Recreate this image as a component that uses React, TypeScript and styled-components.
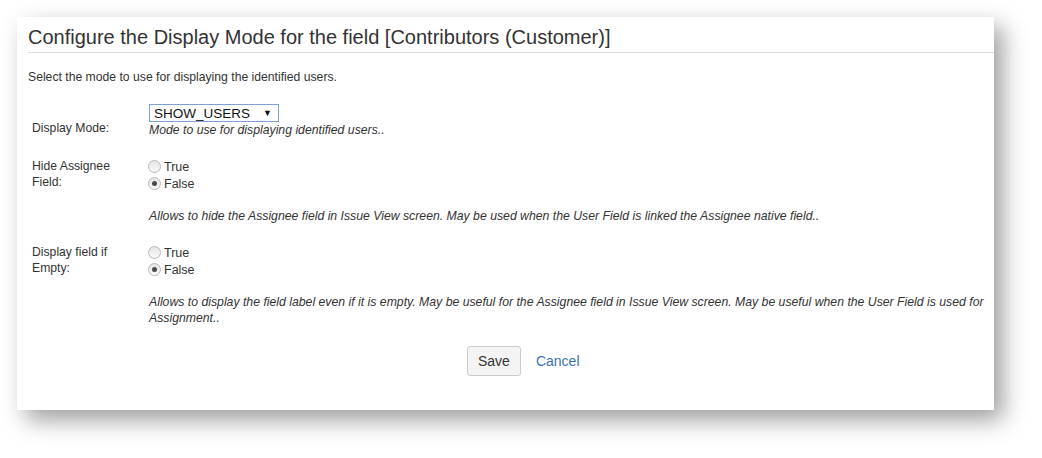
import React from 'react';
import styled, { createGlobalStyle } from 'styled-components';

const GlobalStyle = createGlobalStyle`
    html, body {
        margin: 0;
        padding: 0;
        background: #ffffff;
    }
    body {
        font-family: "Liberation Sans", Arial, sans-serif;
        color: #333333;
    }
`;

const Page = styled.div`
    width: 1042px;
    height: 458px;
    padding: 17px 0 0 17px;
    box-sizing: border-box;
    background: #ffffff;
`;

const Panel = styled.div`
    width: 977px;
    height: 393px;
    box-sizing: border-box;
    padding: 8px 2px 0 11px;
    background: #ffffff;
    box-shadow: 9px 10px 22px rgba(0, 0, 0, 0.38);
`;

const Header = styled.div`
    margin-right: -2px;
    padding-bottom: 3px;
    border-bottom: 1px solid #dcdcdc;
`;

const Title = styled.h2`
    margin: 0;
    font-size: 20px;
    line-height: 24px;
    font-weight: normal;
    color: #333333;
`;

const Intro = styled.p`
    margin: 16px 0 19px 0;
    font-size: 12.2px;
    line-height: 16px;
`;

const FormGrid = styled.div`
    display: grid;
    grid-template-columns: 121px 1fr;
    row-gap: 20px;
`;

const Label = styled.div<{ $offset?: number }>`
    padding: ${p => p.$offset ?? 0}px 0 0 4px;
    font-size: 12.2px;
    line-height: 16px;
    width: 92px;
`;

const Field = styled.div`
    display: flex;
    flex-direction: column;
    align-items: flex-start;
`;

const Select = styled.div`
    display: flex;
    align-items: center;
    justify-content: space-between;
    width: 130px;
    height: 18px;
    box-sizing: border-box;
    padding: 0 6px 0 4px;
    border: 1px solid #7f9fd6;
    background: #ffffff;
    font-size: 13.5px;
    color: #111111;
`;

const Arrow = styled.span`
    font-size: 9px;
    color: #111111;
`;

const Help = styled.div<{ $gap?: number }>`
    margin-top: ${p => p.$gap ?? 0}px;
    font-size: 12.25px;
    line-height: 16px;
    font-style: italic;
    color: #333333;
`;

const RadioRow = styled.label`
    display: flex;
    align-items: center;
    height: 17px;
    font-size: 12.5px;
    color: #333333;
`;

const RadioDot = styled.span<{ $checked?: boolean }>`
    position: relative;
    display: inline-block;
    width: 13px;
    height: 13px;
    margin: 0 3px 0 -1px;
    border-radius: 50%;
    border: 1px solid #b8b8b8;
    background: linear-gradient(#e6e6e6, #f8f8f8);
    box-sizing: border-box;

    &::after {
        content: '';
        display: ${p => (p.$checked ? 'block' : 'none')};
        position: absolute;
        left: 3px;
        top: 3px;
        width: 5px;
        height: 5px;
        border-radius: 50%;
        background: #4a4a4a;
    }
`;

const Actions = styled.div`
    display: flex;
    align-items: center;
    gap: 15px;
    margin-top: 20px;
    padding-left: 439px;
`;

const Button = styled.button`
    height: 30px;
    padding: 0 10px;
    border: 1px solid #cccccc;
    border-radius: 3px;
    background: #f4f4f4;
    font-family: "Liberation Sans", Arial, sans-serif;
    font-size: 14px;
    color: #333333;
`;

const CancelLink = styled.a`
    font-size: 14px;
    color: #3b73af;
    text-decoration: none;
`;

function Radio({ label, checked }: { label: string; checked?: boolean }) {
    return (
        <RadioRow>
            <RadioDot $checked={checked} />
            {label}
        </RadioRow>
    );
}

export default function App() {
    return (
        <Page>
            <GlobalStyle />
            <Panel>
                <Header>
                    <Title>Configure the Display Mode for the field [Contributors (Customer)]</Title>
                </Header>
                <Intro>Select the mode to use for displaying the identified users.</Intro>
                <FormGrid>
                    <Label $offset={16}>Display Mode:</Label>
                    <Field>
                        <Select>
                            SHOW_USERS
                            <Arrow>▼</Arrow>
                        </Select>
                        <Help>Mode to use for displaying identified users..</Help>
                    </Field>

                    <Label>Hide Assignee Field:</Label>
                    <Field>
                        <Radio label="True" />
                        <Radio label="False" checked />
                        <Help $gap={16}>
                            Allows to hide the Assignee field in Issue View screen. May be used when the User Field is linked the Assignee native field..
                        </Help>
                    </Field>

                    <Label>Display field if Empty:</Label>
                    <Field>
                        <Radio label="True" />
                        <Radio label="False" checked />
                        <Help $gap={16}>
                            Allows to display the field label even if it is empty. May be useful for the Assignee field in Issue View screen. May be useful when the User Field is used for Assignment..
                        </Help>
                    </Field>
                </FormGrid>
                <Actions>
                    <Button>Save</Button>
                    <CancelLink href="#">Cancel</CancelLink>
                </Actions>
            </Panel>
        </Page>
    );
}
